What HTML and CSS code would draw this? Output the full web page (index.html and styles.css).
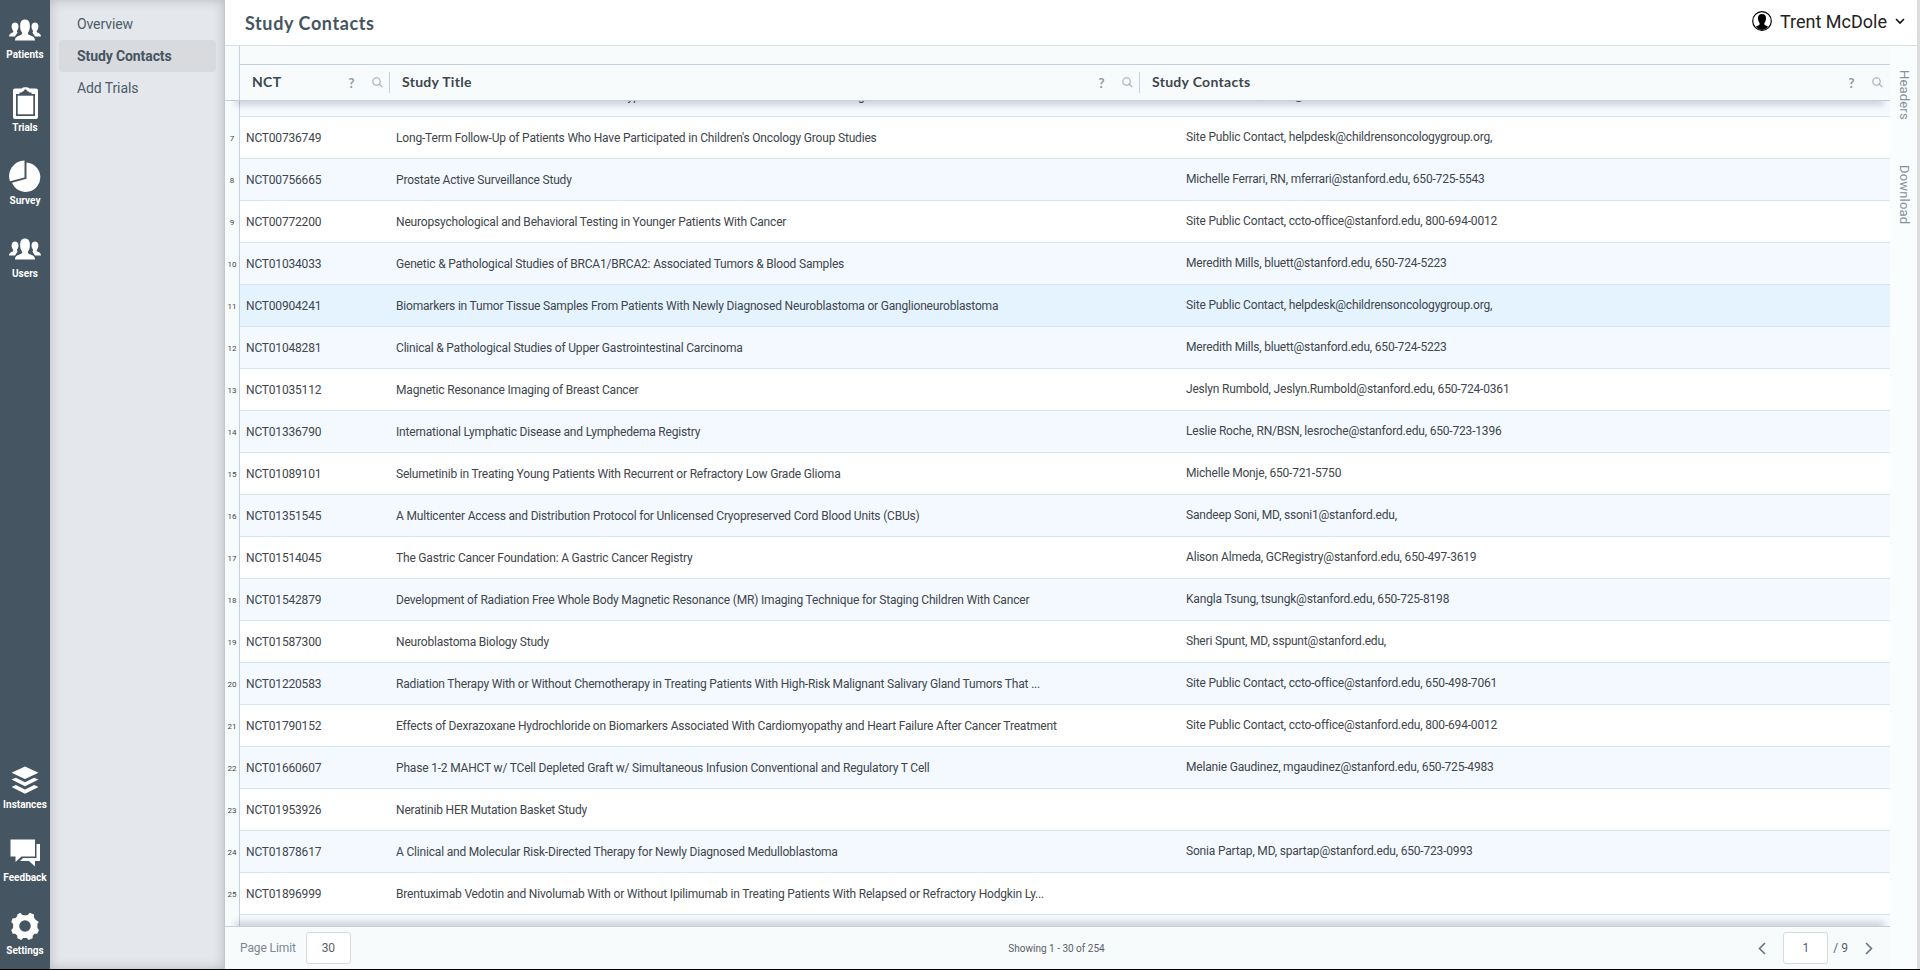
FILE: index.html
```
<!DOCTYPE html>
<html lang="en">
<head>
<meta charset="utf-8">
<title>Study Contacts</title>
<link rel="stylesheet" href="styles.css">
</head>
<body>
<svg class="defs" width="0" height="0">
  <symbol id="people" viewBox="0 0 32 22">
    <path d="M6 17.500H0c0-2.400 1.600-3.200 3.800-4 .8-.4.600-1.500 0-2.300C2.600 9.600 2.500 8 2.700 6.500 3 4.600 4.300 3.600 6 3.600s3.100 1 3.400 2.900c.2 1.500.1 3.100-1.100 4.700-.5.700-.5 1.800.3 2.200z"/>
    <path d="M26 17.500h6c0-2.400-1.600-3.200-3.800-4-.8-.4-.6-1.500 0-2.300 1.200-1.600 1.300-3.200 1.100-4.700-.3-1.900-1.600-2.900-3.300-2.900s-3.100 1-3.400 2.900c-.2 1.500-.1 3.100 1.100 4.700.5.700.5 1.800-.3 2.200z"/>
    <path d="M6 21.500c0-3.300 2-4.300 5.800-5.600 1.700-.6 1.500-2.200.6-3.400C11.300 11 11 9 11.200 5.500 11.400 2 13.200.4 16 .4s4.600 1.600 4.800 5.100c.2 3.500-.1 5.500-1.200 7-.9 1.200-1.100 2.800.6 3.400 3.800 1.300 5.800 2.300 5.800 5.600z"/>
  </symbol>
  <symbol id="search" viewBox="0 0 11 11">
    <circle cx="4.500" cy="4.500" r="3.700"/><path d="M7.200 7.200l3.200 3"/>
  </symbol>
</svg>
<div class="app">
  <nav class="rail">
    <a class="item"><svg class="i-people" viewBox="0 0 32 22"><use href="#people"/></svg><span>Patients</span></a>
    <a class="item"><svg class="i-clip" viewBox="0 0 25 32"><path fill-rule="evenodd" d="M2 1.500h6.500C9 .6 11 .2 12.500.2s3.500.4 4 1.300H23a2 2 0 0 1 2 2V30a2 2 0 0 1-2 2H2a2 2 0 0 1-2-2V3.500a2 2 0 0 1 2-2zM3 7v22h19V7h-3.500V5.500h-2C15.800 4 14.500 5 14 3.800a1.500 1.500 0 0 0-3 0C10.500 5 9.200 4 8.500 5.500h-2V7z"/><path d="M4.700 8.700h15.600v18.600H4.700z"/></svg><span>Trials</span></a>
    <a class="item"><svg class="i-pie" viewBox="0 0 32 32"><path d="M15.500.5v17L1 21.300A15.600 15.600 0 0 1 15.500.5z"/><path d="M17.500 2.500A14.700 14.700 0 1 1 3 22.700l14.500-3.900z"/></svg><span>Survey</span></a>
    <a class="item"><svg class="i-people" viewBox="0 0 32 22"><use href="#people"/></svg><span>Users</span></a>
    <div class="grow"></div>
    <a class="item"><svg class="i-layers" viewBox="0 0 28 28"><path d="M14 .5l13.500 6.300L14 13.100.5 6.800z"/><path d="M.5 13.600l4.300-1.900L14 16.200l9.200-4.500 4.300 1.900L14 20.300z"/><path d="M.5 21l4.300-1.900L14 23.600l9.200-4.500 4.300 1.900L14 27.700z"/></svg><span>Instances</span></a>
    <a class="item"><svg class="i-chat" viewBox="0 0 30 28"><path d="M.5.500H25v17H11.500L5.500 23v-5.500h-5z"/><path d="M26.500 5h3.500v17h-5v5.500l-6-5.500h-9l3-3h13.500z"/></svg><span>Feedback</span></a>
    <a class="item"><svg class="i-gear" viewBox="0 0 28 28"><path fill-rule="evenodd" d="M9.300.8l1.700 1.900a8 8 0 0 0 6 0L18.700.8l4.300 1.800-.1 2.600a8 8 0 0 0 4 4l.7.500v.2l.3 0-1.500 2.200v3.800l1.500 2.200-1.600 3.600-2.600.1-2 2-.1 2.500-3.900 1.700-1.900-1.900h-3.600l-1.900 1.900-3.900-1.700-.1-2.500-2-2-2.600-.1L.2 18.100l1.900-2.200v-3.800L.2 9.900l1.500-3.600 2.600-.1 1.900-1.900.1-1.900zM14 8.200a5.800 5.800 0 1 0 0 11.600 5.800 5.800 0 0 0 0-11.600z"/></svg><span>Settings</span></a>
  </nav>
  <aside class="submenu">
    <a>Overview</a>
    <a class="active">Study Contacts</a>
    <a>Add Trials</a>
  </aside>
  <main class="main">
    <header class="topbar">
      <h1>Study Contacts</h1>
      <div class="user">
        <svg class="avatar" viewBox="0 0 20 20"><circle cx="10" cy="10" r="9.300" fill="none" stroke="#000" stroke-width="1.200"/><path d="M10 3c2.600 0 4 1.500 4 4 0 2-.4 3.200-1.200 4.400-.8 1.200-.6 2.300.4 2.800 1.200.6 2.200.9 3 1.600A9 9 0 0 1 10 19a9 9 0 0 1-6.200-3.200c.8-.7 1.800-1 3-1.600 1-.5 1.200-1.600.4-2.800C6.400 10.200 6 9 6 7c0-2.500 1.400-4 4-4z"/></svg>
        <span>Trent McDole</span>
        <svg class="caret" viewBox="0 0 10 7"><path d="M1 1l4 4 4-4"/></svg>
      </div>
    </header>
    <div class="body">
      <section class="panel">
        <div class="grid-head">
          <div class="corner"></div>
          <div class="cols">
            <div class="col nct"><b>NCT</b><i>?</i><svg class="mag"><use href="#search"/></svg></div>
            <div class="col title"><b>Study Title</b><i>?</i><svg class="mag"><use href="#search"/></svg></div>
            <div class="col contact"><b>Study Contacts</b><i>?</i><svg class="mag"><use href="#search"/></svg></div>
          </div>
        </div>
        <div class="viewport"><div class="rows" id="rows"></div></div>
        <footer class="pager">
          <div class="side"><label>Page Limit</label><span class="box limit">30</span></div>
          <span class="showing">Showing 1 - 30 of 254</span>
          <div class="side end">
            <svg class="arrow" viewBox="0 0 8 13"><path d="M7 1L1.500 6.500 7 12"/></svg>
            <span class="box page">1</span><span class="total">/ 9</span>
            <svg class="arrow" viewBox="0 0 8 13"><path d="M1 1l5.500 5.500L1 12"/></svg>
          </div>
        </footer>
      </section>
      <div class="tabs"><span>Headers</span><span>Download</span></div>
    </div>
  </main>
  <div class="scroll"></div>
</div>
<div class="base"></div>
<script src="rows.js"></script>
</body>
</html>
```
FILE: rows.js
```
const rows = [
  [6, "", "Collection of Blood and Tumor Tissue in Subtypes of Solid Tumors Treated Before or During Care", "Meredith Mills, bluett@stanford.edu"],
  [7, "NCT00736749", "Long-Term Follow-Up of Patients Who Have Participated in Children's Oncology Group Studies", "Site Public Contact, helpdesk@childrensoncologygroup.org,"],
  [8, "NCT00756665", "Prostate Active Surveillance Study", "Michelle Ferrari, RN, mferrari@stanford.edu, 650-725-5543"],
  [9, "NCT00772200", "Neuropsychological and Behavioral Testing in Younger Patients With Cancer", "Site Public Contact, ccto-office@stanford.edu, 800-694-0012"],
  [10, "NCT01034033", "Genetic & Pathological Studies of BRCA1/BRCA2: Associated Tumors & Blood Samples", "Meredith Mills, bluett@stanford.edu, 650-724-5223"],
  [11, "NCT00904241", "Biomarkers in Tumor Tissue Samples From Patients With Newly Diagnosed Neuroblastoma or Ganglioneuroblastoma", "Site Public Contact, helpdesk@childrensoncologygroup.org,"],
  [12, "NCT01048281", "Clinical & Pathological Studies of Upper Gastrointestinal Carcinoma", "Meredith Mills, bluett@stanford.edu, 650-724-5223"],
  [13, "NCT01035112", "Magnetic Resonance Imaging of Breast Cancer", "Jeslyn Rumbold, Jeslyn.Rumbold@stanford.edu, 650-724-0361"],
  [14, "NCT01336790", "International Lymphatic Disease and Lymphedema Registry", "Leslie Roche, RN/BSN, lesroche@stanford.edu, 650-723-1396"],
  [15, "NCT01089101", "Selumetinib in Treating Young Patients With Recurrent or Refractory Low Grade Glioma", "Michelle Monje, 650-721-5750"],
  [16, "NCT01351545", "A Multicenter Access and Distribution Protocol for Unlicensed Cryopreserved Cord Blood Units (CBUs)", "Sandeep Soni, MD, ssoni1@stanford.edu,"],
  [17, "NCT01514045", "The Gastric Cancer Foundation: A Gastric Cancer Registry", "Alison Almeda, GCRegistry@stanford.edu, 650-497-3619"],
  [18, "NCT01542879", "Development of Radiation Free Whole Body Magnetic Resonance (MR) Imaging Technique for Staging Children With Cancer", "Kangla Tsung, tsungk@stanford.edu, 650-725-8198"],
  [19, "NCT01587300", "Neuroblastoma Biology Study", "Sheri Spunt, MD, sspunt@stanford.edu,"],
  [20, "NCT01220583", "Radiation Therapy With or Without Chemotherapy in Treating Patients With High-Risk Malignant Salivary Gland Tumors That ...", "Site Public Contact, ccto-office@stanford.edu, 650-498-7061"],
  [21, "NCT01790152", "Effects of Dexrazoxane Hydrochloride on Biomarkers Associated With Cardiomyopathy and Heart Failure After Cancer Treatment", "Site Public Contact, ccto-office@stanford.edu, 800-694-0012"],
  [22, "NCT01660607", "Phase 1-2 MAHCT w/ TCell Depleted Graft w/ Simultaneous Infusion Conventional and Regulatory T Cell", "Melanie Gaudinez, mgaudinez@stanford.edu, 650-725-4983"],
  [23, "NCT01953926", "Neratinib HER Mutation Basket Study", ""],
  [24, "NCT01878617", "A Clinical and Molecular Risk-Directed Therapy for Newly Diagnosed Medulloblastoma", "Sonia Partap, MD, spartap@stanford.edu, 650-723-0993"],
  [25, "NCT01896999", "Brentuximab Vedotin and Nivolumab With or Without Ipilimumab in Treating Patients With Relapsed or Refractory Hodgkin Ly...", ""],
  [26, "", "", ""]
];
const host = document.getElementById("rows");
for (const [n, nct, title, contact] of rows) {
  const row = document.createElement("div");
  row.className = "row" + (n % 2 ? "" : " even") + (n === 11 ? " hover" : "");
  [["num", n > 6 && n < 26 ? n : ""], ["nct", nct], ["title", title], ["contact", contact]].forEach(([c, t]) => {
    const cell = document.createElement("div");
    cell.className = "cell " + c;
    cell.textContent = t;
    row.append(cell);
  });
  host.append(row);
}
```
FILE: styles.css
```
* { box-sizing: border-box; }
body { margin: 0; width: 1920px; height: 970px; overflow: hidden; font-family: Roboto, sans-serif; background: #fff; }
.defs { position: absolute; }
.app { display: flex; height: 969px; }
.base { height: 1px; background: #000; }
.rail { width: 50px; background: #455561; display: flex; flex-direction: column; padding-bottom: 12px; }
.item { height: 73px; display: flex; flex-direction: column; align-items: center; justify-content: flex-end; color: #fff; font-size: 10px; font-weight: 700; line-height: 12px; }
.item:first-child { height: 61px; }
.item svg { fill: #fff; }
.item span { white-space: nowrap; }
.grow { flex: 1; }
.i-people { width: 32px; height: 22px; margin-bottom: 8px; }
.i-clip { width: 25px; height: 32px; margin-bottom: 3px; }
.i-pie { width: 32px; height: 32px; margin-bottom: 3px; }
.i-layers { width: 28px; height: 28px; margin-bottom: 5px; }
.i-chat { width: 30px; height: 28px; margin-bottom: 5px; }
.i-gear { width: 28px; height: 28px; margin-bottom: 5px; }
.submenu { width: 175px; background: #e4e8ec; padding: 8px 8px 8px 9px; box-shadow: inset 0 0 12px rgba(0,0,0,.2); border-right: 1px solid #c4c8cc; }
.submenu a { display: block; height: 32px; line-height: 32px; padding-left: 18px; font-size: 14px; letter-spacing: -.1px; color: #4d5c68; border-radius: 4px; }
.submenu .active { background: #d8dade; font-weight: 700; color: #455561; }
.main { width: 1692px; display: flex; flex-direction: column; }
.scroll { width: 3px; background: #dcdcdc; }
.topbar { height: 46px; border-bottom: 1px solid #d8dfe4; display: flex; align-items: center; justify-content: space-between; padding: 0 12px 0 20px; }
h1 { margin: 0; font: 700 18px/24px Lato, sans-serif; letter-spacing: .6px; color: #455561; }
.user { display: flex; align-items: center; font-size: 18px; color: #222; padding-bottom: 3px; }
.avatar { width: 20px; height: 20px; margin-right: 8px; }
.caret { width: 10px; height: 7px; margin-left: 8px; fill: none; stroke: #111; stroke-width: 1.6; }
.body { display: flex; flex: 1; min-height: 0; }
.panel { width: 1665px; display: flex; flex-direction: column; background: #f7fbfc; }
.tabs { width: 27px; background: #f9fdfe; display: flex; flex-direction: column; align-items: center; padding: 24px 2px 0 0; }
.tabs span { writing-mode: vertical-rl; font-size: 13px; line-height: 16px; letter-spacing: .18px; color: #87919b; margin-bottom: 45px; padding-left: 2px; }
.grid-head { height: 55px; display: flex; border-bottom: 1px solid #c3d0e0; position: relative; z-index: 2; }
.grid-head::after { content: ""; position: absolute; left: 10px; right: 6px; bottom: -1px; height: 8px; z-index: -1; box-shadow: 0 4px 6px rgba(0,0,0,.16); }
.corner { width: 15px; border-right: 1px solid #c3d0e0; background: #f7fbfc; }
.cols { flex: 1; display: flex; margin-top: 18px; border-top: 1px solid #c3d0e0; background: #f7fbfc; }
.col { display: flex; align-items: center; font-size: 14px; color: #40464c; position: relative; padding-left: 12px; padding-right: 7px; }
.col + .col::before { content: ""; position: absolute; left: -1px; top: 7px; height: 21px; width: 1px; background: #c3d0e0; }
.col b { flex: 1; font-family: Lato, sans-serif; letter-spacing: .3px; padding-bottom: 2px; }
.col i { font: 700 13px Lato, sans-serif; color: #9297a3; width: 7px; text-align: center; margin-right: 17px; }
.mag { width: 11px; height: 11px; fill: none; stroke: #a3a6af; stroke-width: 1.100; }
.col.nct { width: 150px; }
.col.title { width: 750px; }
.col.contact { width: 750px; }
.viewport { height: 826px; overflow: hidden; border-bottom: 1px solid #c3d0e0; position: relative; }
.viewport::after { content: ""; position: absolute; left: 10px; right: 6px; bottom: -8px; height: 8px; box-shadow: 0 -4px 6px rgba(0,0,0,.16); }
.rows { margin-top: -26px; }
.row { display: flex; height: 42px; font-size: 12px; line-height: 42px; letter-spacing: -.185px; color: #40464c; white-space: nowrap; }
.cell { background: #fff; border-bottom: 1px solid #d5e5f5; }
.even .cell { background: #f4f9ff; }
.hover .cell { background: #e5f3ff; }
.row .cell.num { width: 15px; background: #f7fbfc; border-bottom: 0; border-right: 1px solid #c3d0e0; font-size: 8px; letter-spacing: 0; text-align: center; line-height: 43px; }
.cell.nct { width: 150px; padding-left: 6px; }
.cell.title { width: 750px; padding-left: 6px; }
.cell.contact { width: 750px; padding-left: 46px; line-height: 40px; }
.pager { flex: 1; display: flex; align-items: center; padding: 0 17px 0 15px; font-size: 12px; color: #7c8791; }
.side { flex: 1; display: flex; align-items: center; }
.side label { letter-spacing: -.1px; }
.end { justify-content: flex-end; }
.box { background: #fff; border: 1px solid #d8dcdf; border-radius: 3px; height: 32px; line-height: 30px; width: 45px; text-align: center; color: #596068; }
.limit { margin-left: 10px; }
.showing { font-size: 10px; color: #596068; }
.arrow { width: 8px; height: 13px; fill: none; stroke: #6a7480; stroke-width: 1.600; }
.page { margin-left: 17px; }
.total { margin: 0 17px 0 5px; color: #596068; }
```
